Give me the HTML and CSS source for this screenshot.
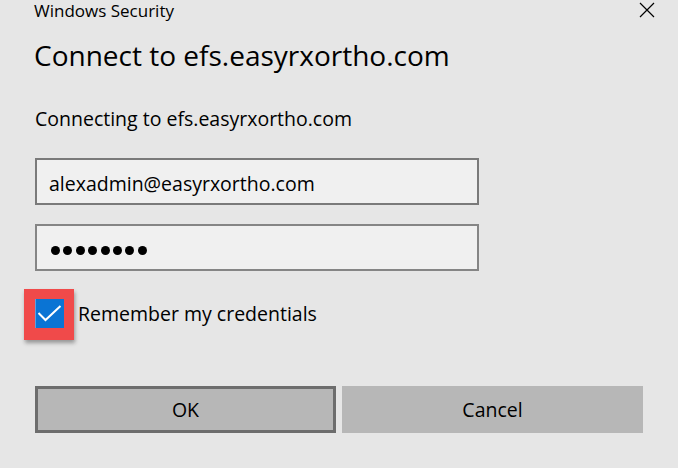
FILE: index.html
```html
<!DOCTYPE html>
<html lang="en">
<head>
<meta charset="utf-8">
<title>Windows Security</title>
<link rel="stylesheet" href="styles.css">
</head>
<body>
<div class="dialog">
  <div class="titlebar">
    <span class="app-name">Windows Security</span>
    <svg class="close" width="16" height="16" viewBox="0 0 16 16" aria-label="Close">
      <path d="M1 1 L15 15 M15 1 L1 15" stroke="#000" stroke-width="1.2" fill="none"/>
    </svg>
  </div>
  <div class="content">
    <h1 class="heading">Connect to efs.easyrxortho.com</h1>
    <p class="message">Connecting to efs.easyrxortho.com</p>
    <div class="field field-user">alexadmin@easyrxortho.com</div>
    <div class="field field-pass">
      <span class="dot"></span><span class="dot"></span><span class="dot"></span><span class="dot"></span><span class="dot"></span><span class="dot"></span><span class="dot"></span><span class="dot"></span>
    </div>
    <label class="remember">
      <span class="checkbox">
        <svg width="29" height="29" viewBox="0 0 29 29">
          <path d="M3.5 14 L10.5 21 L25.5 7" stroke="#fff" stroke-width="2" fill="none"/>
        </svg>
      </span>
      <span class="remember-text">Remember my credentials</span>
    </label>
    <div class="buttons">
      <button class="btn btn-ok">OK</button>
      <button class="btn btn-cancel">Cancel</button>
    </div>
  </div>
</div>
</body>
</html>
```

FILE: styles.css
```css
* { box-sizing: border-box; }
html, body {
  margin: 0;
  padding: 0;
  background: #e6e6e6;
  width: 678px;
  height: 468px;
  overflow: hidden;
}
body {
  font-family: "Open Sans", "Noto Sans", sans-serif;
  color: #000;
}
.titlebar {
  display: flex;
  justify-content: space-between;
  align-items: flex-start;
  height: 22px;
  padding-left: 34px;
  padding-right: 23px;
}
.app-name {
  font-size: 17px;
  line-height: 22px;
}
.close {
  margin-top: 2px;
}
.content {
  padding-left: 35px;
  display: flex;
  flex-direction: column;
}
.heading {
  margin: 14px 0 0 -1px;
  font-size: 28px;
  line-height: 38px;
  font-weight: 400;
}
.message {
  margin: 32px 0 0 0;
  font-size: 19.5px;
  line-height: 26px;
}
.field {
  width: 444px;
  height: 47px;
  background: #f0f0f0;
  border: 2px solid #7a7a7a;
  padding-left: 12px;
  padding-top: 3px;
  display: flex;
  align-items: center;
  font-size: 19.5px;
}
.field-user {
  margin-top: 26px;
}
.field-pass {
  margin-top: 19px;
  border-color: #858585;
  gap: 3.4px;
  padding-left: 14px;
  padding-top: 5px;
}
.dot {
  width: 9px;
  height: 9px;
  border-radius: 50%;
  background: #000;
}
.remember {
  margin-top: 28px;
  display: flex;
  align-items: center;
  gap: 14px;
}
.checkbox {
  position: relative;
  width: 29px;
  height: 29px;
  background: #0a74d4;
  border-left: 1px solid #5aa0e0;
  display: block;
}
.checkbox svg {
  display: block;
  position: relative;
  left: -1px;
}
.checkbox::before {
  content: "";
  position: absolute;
  left: -12px;
  top: -10px;
  right: -10px;
  bottom: -12px;
  border: 10px solid #f04a4a;
  border-left-width: 11px;
  border-bottom-width: 12px;
  box-shadow: 1px 3px 4px rgba(0, 0, 0, 0.35);
}
.remember-text {
  font-size: 19.5px;
  line-height: 26px;
}
.buttons {
  margin-top: 58px;
  display: flex;
  gap: 6px;
}
.btn {
  width: 301px;
  height: 47px;
  background: #b7b7b7;
  border: none;
  font-family: inherit;
  font-size: 19.5px;
  color: #000;
  padding: 0;
}
.btn-ok {
  border: 3px solid #6d6d6d;
}
```
